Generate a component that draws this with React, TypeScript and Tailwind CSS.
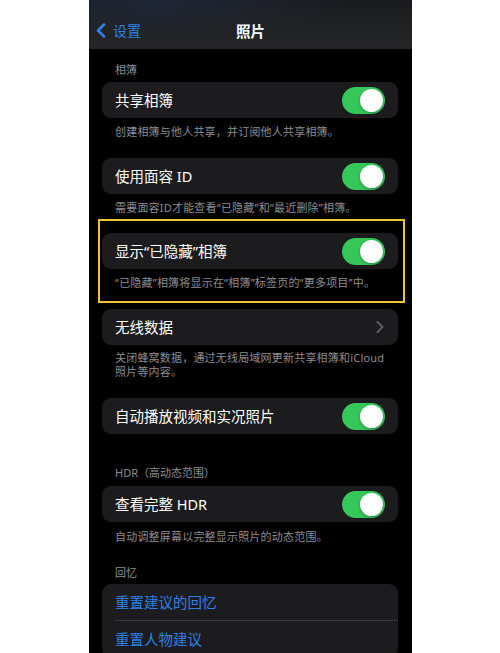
import React from "react";

const FONT = { fontFamily: '"Noto Sans", "Noto Sans CJK SC", sans-serif' };

function Toggle() {
  return (
    <div className="w-[43px] h-[27px] rounded-full bg-[#35c759] relative shrink-0">
      <div className="absolute right-[2px] top-[2px] w-[23px] h-[23px] rounded-full bg-white shadow-[0_1px_3px_rgba(0,0,0,0.3)]" />
    </div>
  );
}

function Row({ label, toggle = true, chevron = false }: { label: string; toggle?: boolean; chevron?: boolean }) {
  return (
    <div className="h-[36px] rounded-[9px] bg-[#1c1c1e] flex items-center justify-between pl-[13px] pr-[13px]">
      <span className="text-[14.5px] text-white leading-none">{label}</span>
      {toggle && <Toggle />}
      {chevron && (
        <svg width="8" height="12" viewBox="0 0 8 12" className="mr-[1px]">
          <path d="M1.5 1 L6.5 6 L1.5 11" fill="none" stroke="#5d5d62" strokeWidth="2" strokeLinecap="round" strokeLinejoin="round" />
        </svg>
      )}
    </div>
  );
}

function Desc({ children, className = "" }: { children: React.ReactNode; className?: string }) {
  return (
    <div className={`pl-[13px] pr-[10px] text-[11px] leading-[14px] text-[#8d8d92] tracking-[0.2px] ${className}`}>{children}</div>
  );
}

function Label({ children, className = "" }: { children: React.ReactNode; className?: string }) {
  return (
    <div className={`pl-[13px] text-[11px] leading-[14px] text-[#8d8d92] ${className}`}>{children}</div>
  );
}

export default function App() {
  return (
    <div className="w-[500px] h-[653px] bg-white overflow-hidden" style={FONT}>
      <div className="ml-[89px] w-[323px] h-[653px] bg-black overflow-hidden">
        {/* Header */}
        <div className="h-[49px] relative bg-[linear-gradient(180deg,#191a1d_0%,#202123_50%,#262627_100%)] flex items-end pb-[11px]">
          <div className="absolute inset-0 bg-[radial-gradient(ellipse_at_20%_0%,rgba(40,60,100,0.35),transparent_55%)]" />
          <div className="relative flex items-center pl-[7px]">
            <svg width="10" height="15" viewBox="0 0 10 15">
              <path d="M8 1.5 L2 7.5 L8 13.5" fill="none" stroke="#2f80e8" strokeWidth="2.6" strokeLinecap="round" strokeLinejoin="round" />
            </svg>
            <span className="ml-[7px] text-[14px] leading-none text-[#2f80e8]">设置</span>
          </div>
          <div className="absolute left-0 right-0 bottom-[11px] text-center text-[14.5px] font-semibold leading-none text-white">照片</div>
        </div>

        <div className="pl-[13px] pr-[14px]">
          <Label className="mt-[14px]">相簿</Label>
          <div className="mt-[5px]"><Row label="共享相簿" /></div>
          <Desc className="mt-[7px]">创建相簿与他人共享，并订阅他人共享相簿。</Desc>

          <div className="mt-[19px]"><Row label="使用面容 ID" /></div>
          <Desc className="mt-[7px]">需要面容ID才能查看“已隐藏”和“最近删除”相簿。</Desc>
        </div>

        <div className="ml-[9px] w-[307px] h-[84px] mt-[4px] border-2 border-[#f1c232] pt-[12px] pl-[2px] pr-[5px]">
          <Row label="显示“已隐藏”相簿" />
          <Desc className="mt-[7px]">“已隐藏”相簿将显示在“相簿”标签页的“更多项目”中。</Desc>
        </div>

        <div className="pl-[13px] pr-[14px]">
          <div className="mt-[6px]"><Row label="无线数据" toggle={false} chevron /></div>
          <Desc className="mt-[6px]">关闭蜂窝数据，通过无线局域网更新共享相簿和iCloud照片等内容。</Desc>

          <div className="mt-[19px]"><Row label="自动播放视频和实况照片" /></div>

          <Label className="mt-[32px]">HDR（高动态范围）</Label>
          <div className="mt-[6px]"><Row label="查看完整 HDR" /></div>
          <Desc className="mt-[8px]">自动调整屏幕以完整显示照片的动态范围。</Desc>

          <Label className="mt-[22px]">回忆</Label>
          <div className="mt-[4px] rounded-[9px] bg-[#1c1c1e]">
            <div className="h-[36px] flex items-center pl-[13px]">
              <span className="text-[14.5px] leading-none text-[#2f80e8]">重置建议的回忆</span>
            </div>
            <div className="ml-[13px] h-px bg-[#38383a]" />
            <div className="h-[36px] flex items-center pl-[13px]">
              <span className="text-[14.5px] leading-none text-[#2f80e8]">重置人物建议</span>
            </div>
          </div>
        </div>
      </div>
    </div>
  );
}
